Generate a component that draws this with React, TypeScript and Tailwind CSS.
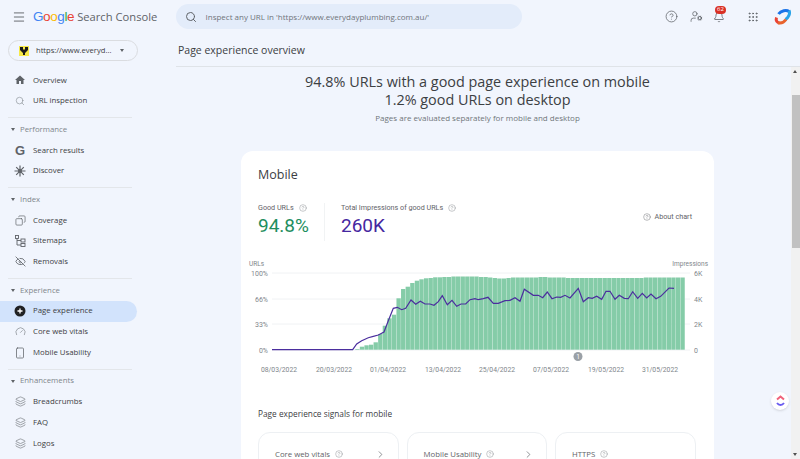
import { Bell, ChevronRight, CircleHelp, Copy, EyeOff, Gauge, Grip, Layers, Menu, Search, Smartphone, UserCog } from 'lucide-react'

const SECTIONS = [
  { label: '', items: [{ name: 'Overview', icon: 'home' }, { name: 'URL inspection', icon: 'search' }] },
  { label: 'Performance', items: [{ name: 'Search results', icon: 'g' }, { name: 'Discover', icon: 'discover' }] },
  { label: 'Index', items: [{ name: 'Coverage', icon: 'coverage' }, { name: 'Sitemaps', icon: 'sitemaps' }, { name: 'Removals', icon: 'removals' }] },
  { label: 'Experience', items: [{ name: 'Page experience', icon: 'page' }, { name: 'Core web vitals', icon: 'vitals' }, { name: 'Mobile Usability', icon: 'mobile' }] },
  { label: 'Enhancements', items: [{ name: 'Breadcrumbs', icon: 'layers' }, { name: 'FAQ', icon: 'layers' }, { name: 'Logos', icon: 'layers' }] },
]

function NavIcon({ name }: { name: string }) {
  const cls = 'text-[#5f6368]'
  if (name === 'home') return <svg width="12" height="12" viewBox="0 0 24 24" fill="#5f6368"><path d="M10 20v-6h4v6h5v-8h3L12 3 2 12h3v8z" /></svg>
  if (name === 'search') return <Search size={10} strokeWidth={1.4} className="text-[#80868b]" />
  if (name === 'g') return <span className="text-[13px] font-bold leading-none text-[#5f6368] font-['Liberation_Sans',sans-serif]">G</span>
  if (name === 'discover') return (
    <svg width="12" height="12" viewBox="0 0 12 12" stroke="#5f6368" strokeWidth="1.2">
      <path d="M6 .5v11M.5 6h11M2.2 2.2l7.6 7.6M9.8 2.2l-7.6 7.6" />
      <circle cx="6" cy="6" r="2" fill="#5f6368" stroke="none" />
    </svg>
  )
  if (name === 'coverage') return <Copy size={11} strokeWidth={1.5} className={`${cls} -scale-x-100`} />
  if (name === 'sitemaps') return (
    <svg width="11" height="12" viewBox="0 0 11 12" fill="none" stroke="#5f6368" strokeWidth="0.9">
      <rect x="0.5" y="0.5" width="3" height="3" />
      <rect x="6" y="4" width="4" height="3" />
      <rect x="6" y="8.5" width="4" height="3" />
      <path d="M2 3.5V10h4M2 5.5h4" />
    </svg>
  )
  if (name === 'removals') return <EyeOff size={11} strokeWidth={1.8} className={cls} />
  if (name === 'page') return (
    <svg width="12" height="12" viewBox="0 0 24 24"><circle cx="12" cy="12" r="11" fill="#202124" /><path d="M12 7v10M7 12h10" stroke="#fff" strokeWidth="2.6" /></svg>
  )
  if (name === 'vitals') return <Gauge size={11} strokeWidth={1.3} className="text-[#70757a]" />
  if (name === 'mobile') return <Smartphone size={12} strokeWidth={1.5} className={cls} />
  return <Layers size={11} strokeWidth={1.4} className="text-[#70757a]" />
}

function Sidebar() {
  return (
    <aside className="flex w-[176px] shrink-0 flex-col overflow-hidden">
      <div className="ml-[8px] mt-[7px] flex h-[21px] w-[130px] items-center rounded-full border border-[#dadce0] pl-[10px]">
        <svg width="10" height="10" viewBox="0 0 10 10" className="shrink-0"><rect width="10" height="10" fill="#f7e948" /><path d="M1 1h3v2l1 1 1-1V1h3v3L6 7v2H4V7L1 4z" fill="#1b1b1b" /></svg>
        <span className="ml-[7px] w-[76px] whitespace-nowrap text-[7.6px] text-[#3c4043]">https://www.everyd...</span>
        <span className="ml-[8px] h-0 w-0 border-x-[2.5px] border-t-[3px] border-x-transparent border-t-[#5f6368]" />
      </div>
      <nav className="mt-[9px]">
        {SECTIONS.map(section => (
          <div key={section.label}>
            {section.label && (
              <div className="mt-[5.7px]">
                <div className="ml-[8px] w-[124px] border-t border-[#e3e6ea]" />
                <div className="flex h-[22px] items-center pl-[11px] pt-[1px] text-[7.8px] text-[#80868b]">
                  <span className="mr-[5px] h-0 w-0 border-x-[2.5px] border-t-[3px] border-x-transparent border-t-[#5f6368]" />
                  {section.label}
                </div>
              </div>
            )}
            {section.items.map(item => (
              <div
                key={item.name}
                className={`flex h-[20.7px] w-[137px] items-center rounded-r-full text-[7.8px] text-[#3c4043] ${item.name === 'Page experience' ? 'bg-[#d2e3fc]' : ''}`}
              >
                <span className="flex w-[33px] shrink-0 items-center justify-center pl-[7px]"><NavIcon name={item.icon} /></span>
                {item.name}
              </div>
            ))}
          </div>
        ))}
      </nav>
    </aside>
  )
}

function Header() {
  return (
    <header className="flex h-[33px] shrink-0 items-center">
      <Menu size={14} strokeWidth={1.6} className="ml-[12px] text-[#5f6368]" />
      <div className="ml-[7px] flex w-[143px] items-baseline leading-none">
        <span className="font-['Liberation_Sans',sans-serif] text-[13.5px] tracking-[-0.4px]">
          <span className="text-[#4285f4]">G</span>
          <span className="text-[#ea4335]">o</span>
          <span className="text-[#fbbc05]">o</span>
          <span className="text-[#4285f4]">g</span>
          <span className="text-[#34a853]">l</span>
          <span className="text-[#ea4335]">e</span>
        </span>
        <span className="ml-[3px] whitespace-nowrap text-[11.2px] text-[#5f6368]">Search Console</span>
      </div>
      <div className="ml-[-0.5px] flex h-[25px] w-[346px] items-center rounded-full bg-[#e3ecfa] pl-[9px]">
        <Search size={12} strokeWidth={2} className="text-[#5f6368]" />
        <span className="ml-[9px] text-[8px] text-[#70757a]">Inspect any URL in 'https://www.everydayplumbing.com.au/'</span>
      </div>
      <div className="ml-auto flex items-center pr-[9px]">
        <CircleHelp size={13} strokeWidth={1.4} className="text-[#5f6368]" />
        <UserCog size={13} strokeWidth={1.4} className="ml-[12px] text-[#5f6368]" />
        <span className="relative ml-[10px]">
          <Bell size={12} strokeWidth={1.6} className="text-[#5f6368]" />
          <span className="absolute left-[2px] top-[-5px] flex h-[8px] w-[11px] items-center justify-center rounded-full bg-[#d93025] text-[6px] text-white">62</span>
        </span>
        <Grip size={12} strokeWidth={1.8} className="ml-[22px] text-[#5f6368]" />
        <svg width="17" height="17" viewBox="0 0 17 17" fill="none" strokeWidth="3" className="ml-[15px]">
          <path d="M15 3.5C12.5 1.5 7 2.5 4.5 6" stroke="#1a73e8" />
          <path d="M15 2.5c1.5 3-.5 7-3.5 9" stroke="#29a3e8" />
          <path d="M2.5 9.5c-1 3 .5 5 3 5.5" stroke="#ea4335" />
          <path d="M4 14.8c3 .7 6-.5 8-3.3" stroke="#e8632d" />
        </svg>
      </div>
    </header>
  )
}

// points read off the screenshot, in page pixels
const LINE = '272,350.7 352.7,350.7 356.7,345 361.7,341.7 368.3,338.7 373.3,337.3 378.3,336 384,333 388.3,321.7 393.3,309.3 397.3,308.3 401.7,310.7 405.7,309.3 411,301 415.7,305.3 420.3,302.3 425,305 430,305 434,306.3 438.3,302.7 442.3,296.7 447.3,305.7 452,301.3 456.7,307.3 461,305 465.7,305 470,300.7 475,299.7 478.3,300.7 483.3,299.7 488,298.3 493.3,304.3 498.3,304.3 505,301.7 510,301.3 515,298.7 520,302.3 524.3,290.3 533.3,296.3 538.3,296.3 542.7,298.7 547.3,293 552,299.7 556.7,298 560.7,298.3 565,296.3 570,299 578.3,289.3 583.3,302.7 588.3,298.7 592.3,299.3 596.7,297.3 601.7,300.3 606,292.3 610,292.3 615,300.3 619.3,296.3 624.3,299.3 628.3,299.7 632.7,292.7 637.7,299.3 642.3,294.3 646.7,299 651,295 656,299.7 660.7,297.3 669,289 674,289.3'

const EARLY_TOPS = [350, 347.7, 346.3, 345.7, 343.3, 335, 326.7, 319.3, 315.7, 299.3, 290, 287.7, 284, 281.7, 280.3, 279.3, 279, 278.3, 278.3]
const LATE_TOPS = [278, 278, 277.5, 277.5, 277.5, 277.5, 277.5, 277.5, 278, 278, 278.5, 279, 279.5, 279.5, 279, 278.5, 278.5, 278.5, 278.5, 278.5, 278.5, 278, 278, 278.5, 278.5, 278.5, 278.5, 279, 279, 279, 279, 279, 279, 279, 279, 279, 279, 279, 279, 279, 279, 279, 279, 279, 278.5, 278.5, 278.5, 278.5, 278.5, 278.5, 278.5, 278.5, 278.5]
const BAR_TOPS = [...EARLY_TOPS, ...LATE_TOPS]
const BAR_STEP = 4.58
const BAR_START = 685 - BAR_TOPS.length * BAR_STEP

const X_LABELS = [
  { x: 279, t: '08/03/2022' }, { x: 334, t: '20/03/2022' }, { x: 388, t: '01/04/2022' }, { x: 443, t: '13/04/2022' },
  { x: 497, t: '25/04/2022' }, { x: 551, t: '07/05/2022' }, { x: 606, t: '19/05/2022' }, { x: 660, t: '31/05/2022' },
]

function Chart() {
  return (
    <svg width="473" height="126" viewBox="241 257 473 126" className="block font-['Roboto',sans-serif]">
      <text x="249" y="267" fontSize="6.5" fill="#80868b">URLs</text>
      <text x="708" y="267" fontSize="6.5" fill="#80868b" textAnchor="end">Impressions</text>
      {[['100%', 274, '6K'], ['66%', 300, '4K'], ['33%', 325, '2K'], ['0%', 351, '0']].map(([l, y, r]) => (
        <g key={l}>
          <line x1="272" x2="690" y1={y} y2={y} stroke="#eceff1" strokeWidth="0.8" />
          <text x="268" y={Number(y) + 2.5} fontSize="7" fill="#80868b" textAnchor="end">{l}</text>
          <text x="694" y={Number(y) + 2.5} fontSize="7" fill="#80868b">{r}</text>
        </g>
      ))}
      {BAR_TOPS.map((top, i) => (
        <rect key={i} x={BAR_START + i * BAR_STEP} y={top} width={BAR_STEP - 0.25} height={350.7 - top} fill="#85cca8" />
      ))}
      <polyline points={LINE} fill="none" stroke="#4b2e9e" strokeWidth="1.2" />
      <circle cx="578" cy="357.5" r="4.5" fill="#9aa0a6" />
      <text x="578" y="360" fontSize="6.5" fill="#fff" textAnchor="middle">1</text>
      {X_LABELS.map(l => (
        <text key={l.t} x={l.x} y="373" fontSize="6.8" fill="#80868b" textAnchor="middle">{l.t}</text>
      ))}
    </svg>
  )
}

function HelpDot({ size = 8 }: { size?: number }) {
  return <CircleHelp size={size} strokeWidth={1.3} className="ml-[5px] inline-block text-[#80868b]" />
}

function SignalCard({ title, arrow }: { title: string; arrow?: boolean }) {
  return (
    <div className="flex h-[60px] w-[140.5px] items-start justify-between rounded-t-[12px] border border-[#edf0f3] pl-[16px] pr-[12px] pt-[16px] text-[7.8px] text-[#5f6368]">
      <span className="flex items-center">{title}<HelpDot /></span>
      {arrow && <ChevronRight size={11} strokeWidth={1.5} className="text-[#5f6368]" />}
    </div>
  )
}

function Main() {
  return (
    <main className="flex min-w-0 flex-1 flex-col">
      <div className="flex h-[33.5px] shrink-0 items-center border-b border-[#dfe3e8] pl-[2px] pt-[3px] text-[10.5px] text-[#3c4043]">
        Page experience overview
      </div>
      <div className="flex min-h-0 flex-1">
        <div className="min-w-0 flex-1 overflow-hidden">
          <div className="w-[603px] pt-[6px] text-center leading-[18.5px] text-[#3c4043]">
            <div className="text-[14.4px]">94.8% URLs with a good page experience on mobile</div>
            <div className="text-[14.4px]">1.2% good URLs on desktop</div>
            <div className="mt-[3px] text-[8px] leading-[10px] text-[#70757a]">Pages are evaluated separately for mobile and desktop</div>
          </div>
          <section className="ml-[65px] mt-[28px] w-[473px] rounded-[12px] bg-white">
            <h2 className="pl-[17px] pt-[15px] text-[12.5px] font-normal leading-[17px] text-[#3c4043]">Mobile</h2>
            <div className="mt-[20px] flex h-[38px] pl-[17px] font-['Roboto',sans-serif]">
              <div className="w-[67px] border-r border-[#f1f3f4]">
                <div className="flex items-center text-[7.2px] leading-[10px] text-[#5f6368]">Good URLs<HelpDot /></div>
                <div className="text-[19px] leading-[25px] text-[#1e8e5e]">94.8%</div>
              </div>
              <div className="pl-[16px]">
                <div className="flex items-center text-[7.2px] leading-[10px] text-[#5f6368]">Total Impressions of good URLs<HelpDot /></div>
                <div className="text-[19px] leading-[25px] text-[#4527a0]">260K</div>
              </div>
              <div className="ml-auto flex items-start pr-[22px] pt-[9px] text-[7.2px] text-[#5f6368]">
                <CircleHelp size={8} strokeWidth={1.3} className="mr-[3px] mt-[1px]" />About chart
              </div>
            </div>
            <div className="mt-[15px]"><Chart /></div>
            <h3 className="pl-[17px] pt-[26px] text-[8.3px] font-normal leading-[12px] text-[#3c4043]">Page experience signals for mobile</h3>
            <div className="mt-[12px] flex gap-[8px] pl-[17px]">
              <SignalCard title="Core web vitals" arrow />
              <SignalCard title="Mobile Usability" arrow />
              <SignalCard title="HTTPS" />
            </div>
          </section>
        </div>
        <div className="relative w-[9px] shrink-0 bg-[#f1f1f1]">
          <span className="absolute left-[2px] top-[3px] h-0 w-0 border-x-[2.5px] border-b-[3px] border-x-transparent border-b-[#505050]" />
          <div className="ml-[1px] mt-[28px] h-[153px] w-[8px] bg-[#c1c1c1]" />
          <span className="absolute bottom-[3px] left-[2px] h-0 w-0 border-x-[2.5px] border-t-[3px] border-x-transparent border-t-[#505050]" />
        </div>
      </div>
    </main>
  )
}

export default function App() {
  return (
    <div className="relative flex h-[459px] w-[800px] flex-col overflow-hidden bg-[#f1f5fd] font-['Open_Sans',sans-serif]">
      <Header />
      <div className="flex min-h-0 flex-1">
        <Sidebar />
        <Main />
      </div>
      {/* floating helper bubble */}
      <div className="absolute left-[771px] top-[392px] flex h-[18px] w-[18px] items-center justify-center rounded-full bg-white shadow">
        <svg width="11" height="12" viewBox="0 0 11 12" fill="none" strokeWidth="2">
          <path d="M2 4.5 5.5 1.5 9 4.5" stroke="#f0627a" />
          <path d="M2 8c2 2.5 5 2.5 7 0" stroke="#6a5cf0" />
        </svg>
      </div>
    </div>
  )
}
